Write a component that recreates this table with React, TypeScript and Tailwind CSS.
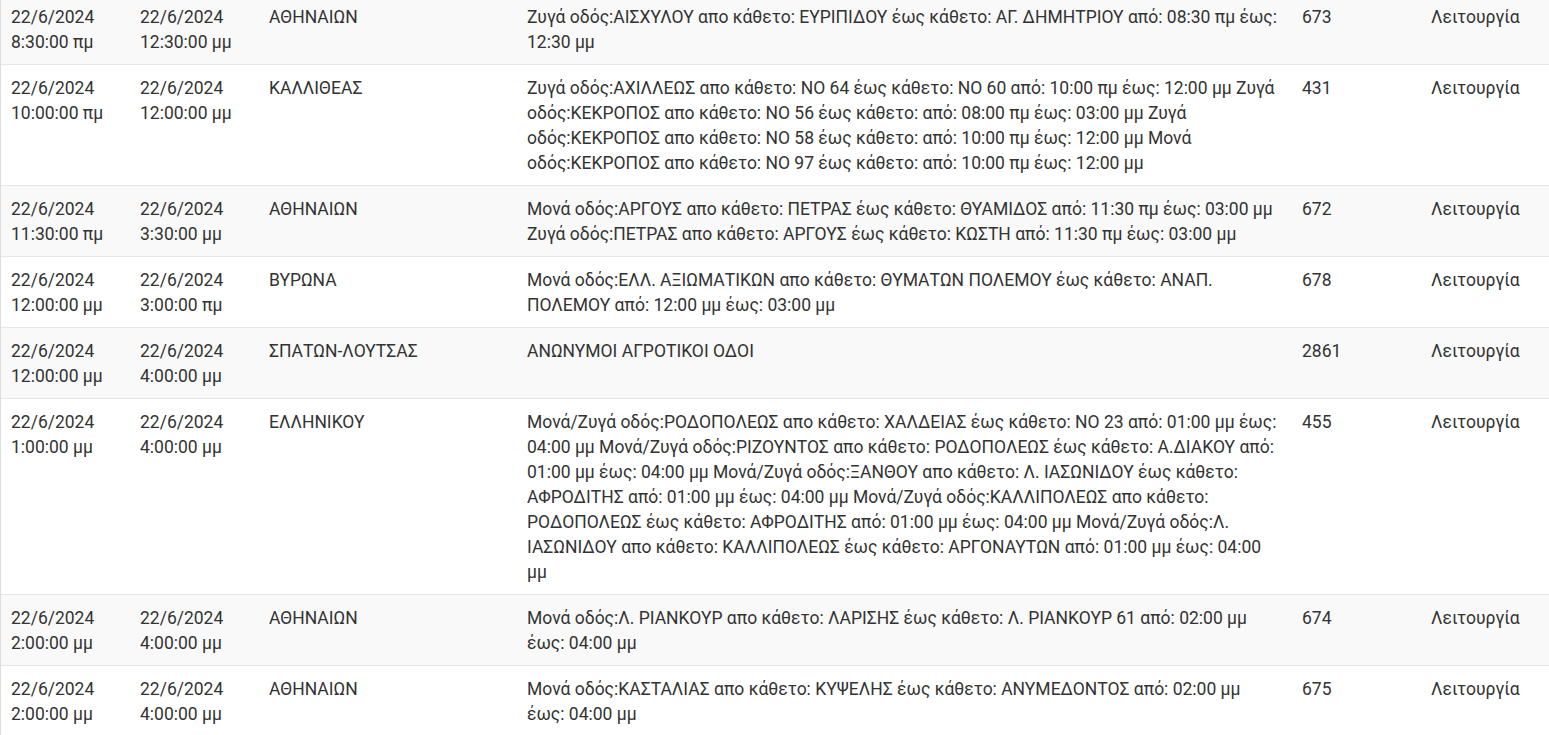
const rows = [
  {
    start: "22/6/2024 8:30:00 πμ",
    end: "22/6/2024 12:30:00 μμ",
    area: "ΑΘΗΝΑΙΩΝ",
    desc: "Ζυγά οδός:ΑΙΣΧΥΛΟΥ απο κάθετο: ΕΥΡΙΠΙΔΟΥ έως κάθετο: ΑΓ. ΔΗΜΗΤΡΙΟΥ από: 08:30 πμ έως: 12:30 μμ",
    code: "673",
  },
  {
    start: "22/6/2024 10:00:00 πμ",
    end: "22/6/2024 12:00:00 μμ",
    area: "ΚΑΛΛΙΘΕΑΣ",
    desc: "Ζυγά οδός:ΑΧΙΛΛΕΩΣ απο κάθετο: ΝΟ 64 έως κάθετο: ΝΟ 60 από: 10:00 πμ έως: 12:00 μμ Ζυγά οδός:ΚΕΚΡΟΠΟΣ απο κάθετο: ΝΟ 56 έως κάθετο: από: 08:00 πμ έως: 03:00 μμ Ζυγά οδός:ΚΕΚΡΟΠΟΣ απο κάθετο: ΝΟ 58 έως κάθετο: από: 10:00 πμ έως: 12:00 μμ Μονά οδός:ΚΕΚΡΟΠΟΣ απο κάθετο: ΝΟ 97 έως κάθετο: από: 10:00 πμ έως: 12:00 μμ",
    code: "431",
  },
  {
    start: "22/6/2024 11:30:00 πμ",
    end: "22/6/2024 3:30:00 μμ",
    area: "ΑΘΗΝΑΙΩΝ",
    desc: "Μονά οδός:ΑΡΓΟΥΣ απο κάθετο: ΠΕΤΡΑΣ έως κάθετο: ΘΥΑΜΙΔΟΣ από: 11:30 πμ έως: 03:00 μμ Ζυγά οδός:ΠΕΤΡΑΣ απο κάθετο: ΑΡΓΟΥΣ έως κάθετο: ΚΩΣΤΗ από: 11:30 πμ έως: 03:00 μμ",
    code: "672",
  },
  {
    start: "22/6/2024 12:00:00 μμ",
    end: "22/6/2024 3:00:00 πμ",
    area: "ΒΥΡΩΝΑ",
    desc: "Μονά οδός:ΕΛΛ. ΑΞΙΩΜΑΤΙΚΩΝ απο κάθετο: ΘΥΜΑΤΩΝ ΠΟΛΕΜΟΥ έως κάθετο: ΑΝΑΠ. ΠΟΛΕΜΟΥ από: 12:00 μμ έως: 03:00 μμ",
    code: "678",
  },
  {
    start: "22/6/2024 12:00:00 μμ",
    end: "22/6/2024 4:00:00 μμ",
    area: "ΣΠΑΤΩΝ-ΛΟΥΤΣΑΣ",
    desc: "ΑΝΩΝΥΜΟΙ ΑΓΡΟΤΙΚΟΙ ΟΔΟΙ",
    code: "2861",
  },
  {
    start: "22/6/2024 1:00:00 μμ",
    end: "22/6/2024 4:00:00 μμ",
    area: "ΕΛΛΗΝΙΚΟΥ",
    desc: "Μονά/Ζυγά οδός:ΡΟΔΟΠΟΛΕΩΣ απο κάθετο: ΧΑΛΔΕΙΑΣ έως κάθετο: ΝΟ 23 από: 01:00 μμ έως: 04:00 μμ Μονά/Ζυγά οδός:ΡΙΖΟΥΝΤΟΣ απο κάθετο: ΡΟΔΟΠΟΛΕΩΣ έως κάθετο: Α.ΔΙΑΚΟΥ από: 01:00 μμ έως: 04:00 μμ Μονά/Ζυγά οδός:ΞΑΝΘΟΥ απο κάθετο: Λ. ΙΑΣΩΝΙΔΟΥ έως κάθετο: ΑΦΡΟΔΙΤΗΣ από: 01:00 μμ έως: 04:00 μμ Μονά/Ζυγά οδός:ΚΑΛΛΙΠΟΛΕΩΣ απο κάθετο: ΡΟΔΟΠΟΛΕΩΣ έως κάθετο: ΑΦΡΟΔΙΤΗΣ από: 01:00 μμ έως: 04:00 μμ Μονά/Ζυγά οδός:Λ. ΙΑΣΩΝΙΔΟΥ απο κάθετο: ΚΑΛΛΙΠΟΛΕΩΣ έως κάθετο: ΑΡΓΟΝΑΥΤΩΝ από: 01:00 μμ έως: 04:00 μμ",
    code: "455",
  },
  {
    start: "22/6/2024 2:00:00 μμ",
    end: "22/6/2024 4:00:00 μμ",
    area: "ΑΘΗΝΑΙΩΝ",
    desc: "Μονά οδός:Λ. ΡΙΑΝΚΟΥΡ απο κάθετο: ΛΑΡΙΣΗΣ έως κάθετο: Λ. ΡΙΑΝΚΟΥΡ 61 από: 02:00 μμ έως: 04:00 μμ",
    code: "674",
  },
  {
    start: "22/6/2024 2:00:00 μμ",
    end: "22/6/2024 4:00:00 μμ",
    area: "ΑΘΗΝΑΙΩΝ",
    desc: "Μονά οδός:ΚΑΣΤΑΛΙΑΣ απο κάθετο: ΚΥΨΕΛΗΣ έως κάθετο: ΑΝΥΜΕΔΟΝΤΟΣ από: 02:00 μμ έως: 04:00 μμ",
    code: "675",
  },
];

export default function App() {
  return (
    <div className="h-[735px] overflow-hidden bg-white font-['Roboto',sans-serif] text-[17.5px] leading-[25px] text-[#333]">
      {/* table is scrolled a few px past its first row's top */}
      <div className="-mt-[6px] w-[1550px] border-l border-[#ddd]">
        {rows.map((r, i) => (
          <div
            key={i}
            className={`grid grid-cols-[129px_129px_258px_775px_129px_129px] border-b border-[#e6e6e6] ${
              i % 2 === 0 ? "bg-[#f9f9f9]" : "bg-white"
            }`}
          >
            <div className="px-[10px] pt-[11px] pb-[9px]">{r.start}</div>
            <div className="px-[10px] pt-[11px] pb-[9px]">{r.end}</div>
            <div className="px-[10px] pt-[11px] pb-[9px]">{r.area}</div>
            <div className="px-[10px] pt-[11px] pb-[9px]">{r.desc}</div>
            <div className="px-[10px] pt-[11px] pb-[9px]">{r.code}</div>
            <div className="px-[10px] pt-[11px] pb-[9px]">Λειτουργία</div>
          </div>
        ))}
      </div>
    </div>
  );
}
